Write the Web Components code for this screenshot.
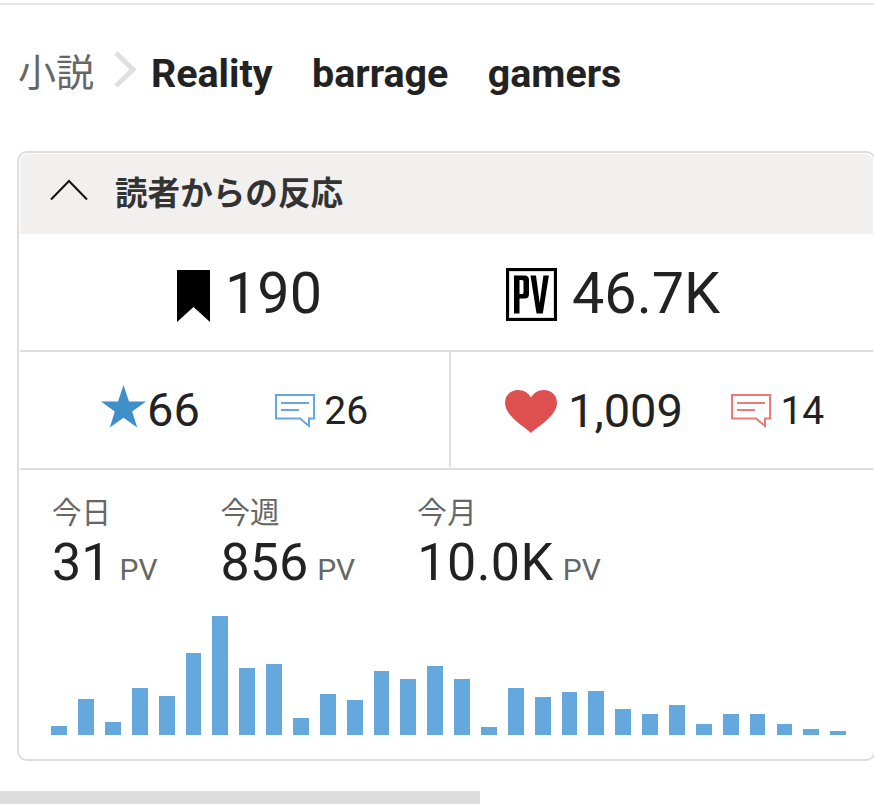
<!DOCTYPE html>
<html lang="ja"><head><meta charset="utf-8">
<style>
html,body{margin:0;padding:0;background:#fff;overflow:hidden;height:809px;width:874px;font-family:Roboto,"Noto Sans CJK JP",sans-serif;color:#222}
</style></head><body>
<top-rule></top-rule>
<bread-crumb cat="小説" title-text="Reality　barrage　gamers"></bread-crumb>
<reaction-card></reaction-card>
<grey-bar></grey-bar>
<script>
const icons={
 bookmark:'<svg style="margin-top:8px" width="33" height="52" viewBox="0 0 33 52"><path d="M0 0H33V52L16.500 37 0 52Z" fill="#000"/></svg>',
 pv:'<svg style="margin-top:5px" width="51" height="53" viewBox="0 0 51 53"><rect x="1.500" y="1.500" width="48" height="50" fill="#fff" stroke="#000" stroke-width="3"/><rect x="3.500" y="3.500" width="44" height="46" fill="none" stroke="#bbb" stroke-width=".5"/><path fill="#000" fill-rule="evenodd" d="M8 7.500H18.500Q23 7.500 23 12V26Q23 30.500 18.500 30.500H13.500V45.500H8ZM13.500 12V26H16Q17.500 26 17.500 24.500V13.500Q17.500 12 16 12Z"/><path fill="#000" d="M24.500 7.500H30L33.700 35 37.400 7.500H42.900L36.800 45.500H30.500Z"/></svg>',
 star:'<svg style="margin-bottom:6px" width="45" height="43" viewBox="0 0 45 43"><path d="M22.500 0 28 16.400H45L31.200 26.500 36.200 42.500 22.500 32.800 8.800 42.500 13.800 26.500 0 16.400H17Z" fill="#3f90c9"/></svg>',
 heart:'<svg style="margin-top:2px" width="52" height="43" viewBox="0 0 52 43"><path d="M26 43C20 37 0 26 0 13 0 5 6 0 13 0 19 0 23.500 3 26 7.500 28.500 3 33 0 39 0 46 0 52 5 52 13 52 26 32 37 26 43Z" fill="#de5050"/></svg>',
};
function bubble(c){return `<svg style="margin-top:2px" width="40" height="34" viewBox="0 0 40 34"><path d="M1 1H39V24.500H34V32L25 24.500H1Z" fill="#fff" stroke="${c}" stroke-width="2"/><path d="M6 9H34M6 16H24" stroke="${c}" stroke-width="2" fill="none"/></svg>`}
function def(name,css,html){
 customElements.define(name,class extends HTMLElement{
  constructor(){super();const s=this.attachShadow({mode:'open'});s.innerHTML=`<style>${css}</style>`+(typeof html==='function'?html(this):html)}
 });
}
def('top-rule',':host{display:block;height:2px;margin-top:3px;background:#e6e6e6}','');
def('grey-bar',':host{display:block;width:480px;height:13px;margin-top:30px;background:#dcdcdc}','');
customElements.define('bread-crumb',class extends HTMLElement{
 connectedCallback(){const s=this.attachShadow({mode:'open'});
 s.innerHTML=`<style>:host{display:flex;align-items:center;height:146px;box-sizing:border-box;padding:0 0 18px 18px;font-size:39.4px}
 .c{color:#666;font-size:38px;font-weight:400;letter-spacing:0}
 svg{margin:0 14px 0 19px;display:block}
 .t{font-weight:700;color:#222;white-space:pre}</style>
 <span class="c">${this.getAttribute('cat')}</span>
 <svg width="24" height="37" viewBox="0 0 24 37"><path d="M3 2 20 18.500 3 35" fill="none" stroke="#e0e0e0" stroke-width="5"/></svg>
 <span class="t">${this.getAttribute('title-text')}</span>`}
});
def('stat-item',`:host{display:flex;align-items:center}
 .n{color:#222;line-height:1}
 :host([big]) .n{font-size:57.5px;margin-left:var(--g,15px);padding-top:3px}
 :host([mid]) .n{font-size:47px;margin-left:var(--g,1px)}
 :host([small]) .n{font-size:39px;margin-left:var(--g,9.500px);padding-top:3px}
 ::slotted(*){display:block}`,
 t=>`<slot></slot><span class="n">${t.getAttribute('n')}</span>`);
def('pv-col',`:host{display:block}
 .l{font-size:29.500px;line-height:36px;color:#666;height:39px}
 .v{font-size:52px;line-height:58px;height:58px;color:#222;white-space:nowrap}
 .u{font-size:30px;color:#666;margin-left:9px;letter-spacing:0}`,
 t=>`<div class="l">${t.getAttribute('l')}</div><div class="v">${t.getAttribute('v')}<span class="u">PV</span></div>`);
def('bar-chart',`:host{display:flex;justify-content:space-between;align-items:flex-end;width:794.800px;height:120px}
 i{display:block;width:15.850px;background:#64a8dd}`,
 ()=>[9,36,13,47,39,82,119,67,71,17,41,35,64,56,69,56,8,47,38,43,44,26,21,30,11,21,21,11,6,4].map(h=>`<i style="height:${h}px"></i>`).join(''));
def('reaction-card',`:host{display:block;box-sizing:border-box;margin-left:17px;width:859px;height:610px;border:2px solid #ddd;border-radius:10px;overflow:hidden;background:#fff;padding:1px}
 .h{display:flex;align-items:center;box-sizing:border-box;height:80px;background:#f1f0ee;padding:0 0 8px 30px;font-size:32.600px;font-weight:700;color:#333;border-radius:8px 8px 0 0}
 .h svg{margin-right:27px;display:block}
 .r1,.r2{display:flex;border-bottom:2px solid #ddd;height:116px}
 .a{display:flex;align-items:center;box-sizing:border-box;flex:0 0 431px}
 .r1 .a:first-child{padding-left:157px}
 .r1 .a:last-child{padding-left:55px;flex:1}
 .r2 .a:first-child{border-right:2px solid #ddd;padding-left:81px;gap:75px;margin-bottom:1px}
 .r2 .a:last-child{flex:1;padding-left:54px;gap:48px}
 .p{display:flex;padding:25px 0 0 32px;gap:63px}
 pv-col:last-child{margin-left:-1px;letter-spacing:.5px}
 bar-chart{margin:23px 0 0 31.300px}`,
 `<div class="h"><svg width="38" height="22" viewBox="0 0 38 22"><path d="M1 20.500 19 2 37 20.500" fill="none" stroke="#111" stroke-width="2"/></svg>読者からの反応</div>
 <div class="r1"><div class="a"><stat-item big n="190">${icons.bookmark}</stat-item></div><div class="a"><stat-item big n="46.7K">${icons.pv}</stat-item></div></div>
 <div class="r2"><div class="a"><stat-item mid n="66">${icons.star}</stat-item><stat-item small n="26">${bubble('#64a8dd')}</stat-item></div>
 <div class="a"><stat-item mid style="--g:11px" n="1,009">${icons.heart}</stat-item><stat-item small n="14">${bubble('#ee7a78')}</stat-item></div></div>
 <div class="p"><pv-col l="今日" v="31"></pv-col><pv-col l="今週" v="856"></pv-col><pv-col l="今月" v="10.0K"></pv-col></div>
 <bar-chart></bar-chart>`);
</script>
</body></html>
